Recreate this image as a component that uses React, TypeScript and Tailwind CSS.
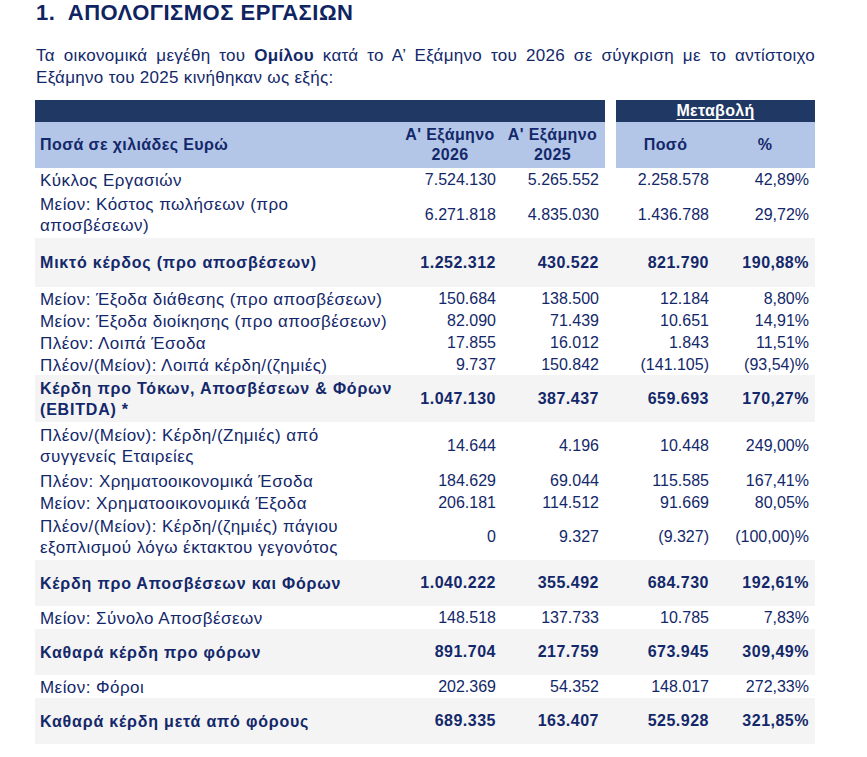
type Row = {
  label: string[];
  v: string[];
  bold?: boolean;
  gray?: boolean;
  h: string;
};

const ROWS: Row[] = [
  { label: ["Κύκλος Εργασιών"], v: ["7.524.130", "5.265.552", "2.258.578", "42,89%"], h: "h-[24px]" },
  { label: ["Μείον: Κόστος πωλήσεων (προ", "αποσβέσεων)"], v: ["6.271.818", "4.835.030", "1.436.788", "29,72%"], h: "h-[46px]" },
  { label: ["Μικτό κέρδος (προ αποσβέσεων)"], v: ["1.252.312", "430.522", "821.790", "190,88%"], bold: true, gray: true, h: "h-[49px]" },
  { label: ["Μείον: Έξοδα διάθεσης (προ αποσβέσεων)"], v: ["150.684", "138.500", "12.184", "8,80%"], h: "h-[22px]" },
  { label: ["Μείον: Έξοδα διοίκησης (προ αποσβέσεων)"], v: ["82.090", "71.439", "10.651", "14,91%"], h: "h-[22px]" },
  { label: ["Πλέον: Λοιπά Έσοδα"], v: ["17.855", "16.012", "1.843", "11,51%"], h: "h-[22px]" },
  { label: ["Πλέον/(Μείον): Λοιπά κέρδη/(ζημιές)"], v: ["9.737", "150.842", "(141.105)", "(93,54)%"], h: "h-[22px]" },
  { label: ["Κέρδη προ Τόκων, Αποσβέσεων & Φόρων", "(EBITDA) *"], v: ["1.047.130", "387.437", "659.693", "170,27%"], bold: true, gray: true, h: "h-[47px]" },
  { label: ["Πλέον/(Μείον): Κέρδη/(Ζημιές) από", "συγγενείς Εταιρείες"], v: ["14.644", "4.196", "10.448", "249,00%"], h: "h-[47px]" },
  { label: ["Πλέον: Χρηματοοικονομικά Έσοδα"], v: ["184.629", "69.044", "115.585", "167,41%"], h: "h-[22px]" },
  { label: ["Μείον: Χρηματοοικονομικά Έξοδα"], v: ["206.181", "114.512", "91.669", "80,05%"], h: "h-[23px]" },
  { label: ["Πλέον/(Μείον): Κέρδη/(ζημιές) πάγιου", "εξοπλισμού λόγω έκτακτου γεγονότος"], v: ["0", "9.327", "(9.327)", "(100,00)%"], h: "h-[46px]" },
  { label: ["Κέρδη προ Αποσβέσεων και Φόρων"], v: ["1.040.222", "355.492", "684.730", "192,61%"], bold: true, gray: true, h: "h-[46px]" },
  { label: ["Μείον: Σύνολο Αποσβέσεων"], v: ["148.518", "137.733", "10.785", "7,83%"], h: "h-[23px]" },
  { label: ["Καθαρά κέρδη προ φόρων"], v: ["891.704", "217.759", "673.945", "309,49%"], bold: true, gray: true, h: "h-[46px]" },
  { label: ["Μείον: Φόροι"], v: ["202.369", "54.352", "148.017", "272,33%"], h: "h-[23px]" },
  { label: ["Καθαρά κέρδη μετά από φόρους"], v: ["689.335", "163.407", "525.928", "321,85%"], bold: true, gray: true, h: "h-[46px]" },
];

const COLS = "grid grid-cols-[365px_100px_105px_11px_99px_100px]";

export default function App() {
  return (
    <div className="w-[867px] h-[757px] bg-white text-[#13286a] font-['Liberation_Sans',Arial,sans-serif] pl-[36px] pr-[52px]">
      <h1 className="text-[22px] leading-[26px] font-bold tracking-[0.5px] text-[#0f2461]">
        1.&nbsp; ΑΠΟΛΟΓΙΣΜΟΣ ΕΡΓΑΣΙΩΝ
      </h1>

      <div className="mt-[19px] text-[17px] leading-[22px] tracking-[0.3px]">
        <p className="text-justify [text-align-last:justify]">
          Τα οικονομικά μεγέθη του <b>Ομίλου</b> κατά το Α’ Εξάμηνο του 2026 σε σύγκριση με το αντίστοιχο
        </p>
        <p>Εξάμηνο του 2025 κινήθηκαν ως εξής:</p>
      </div>

      {/* table */}
      <div className="mt-[11px] -ml-px w-[780px]">
        <div className={`${COLS} h-[22px]`}>
          <div className="col-span-3 bg-[#203864]" />
          <div />
          <div className="col-span-2 bg-[#203864] flex items-center justify-center">
            <span className="text-white font-bold text-[16px] leading-[20px] underline underline-offset-[3px] tracking-[0.3px]">
              Μεταβολή
            </span>
          </div>
        </div>
        <div className={`${COLS} h-[46px] font-bold text-[16px] leading-[20px] tracking-[0.4px] text-[#13286a]`}>
          <div className="bg-[#b4c6e7] flex items-center pl-[5px]">Ποσά σε χιλιάδες Ευρώ</div>
          <div className="bg-[#b4c6e7] flex items-center justify-center text-center">
            Α' Εξάμηνο
            <br />
            2026
          </div>
          <div className="bg-[#b4c6e7] flex items-center justify-center text-center">
            Α' Εξάμηνο
            <br />
            2025
          </div>
          <div />
          <div className="bg-[#b4c6e7] flex items-center justify-center">Ποσό</div>
          <div className="bg-[#b4c6e7] flex items-center justify-center">%</div>
        </div>

        {ROWS.map((r) => (
          <div
            key={r.label[0]}
            className={`${COLS} ${r.h} ${r.gray ? "bg-[#f4f4f4]" : ""} ${
              r.bold ? "font-bold text-[16px] tracking-[0.5px]" : "text-[16px]"
            }`}
          >
            <div
              className={`flex flex-col justify-center pl-[5px] leading-[21px] whitespace-nowrap ${
                r.bold ? "text-[16px] tracking-[0.8px]" : "text-[17px] tracking-[0.45px]"
              }`}
            >
              {r.label.map((l) => (
                <span key={l}>{l}</span>
              ))}
            </div>
            <div className="flex items-center justify-end pr-[4px]">{r.v[0]}</div>
            <div className="flex items-center justify-end pr-[6px]">{r.v[1]}</div>
            <div />
            <div className="flex items-center justify-end pr-[6px]">{r.v[2]}</div>
            <div className="flex items-center justify-end pr-[6px]">{r.v[3]}</div>
          </div>
        ))}
      </div>
    </div>
  );
}
